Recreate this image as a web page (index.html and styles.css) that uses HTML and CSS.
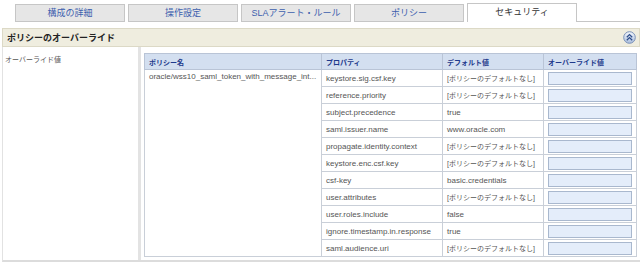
FILE: index.html
```html
<!DOCTYPE html>
<html lang="ja">
<head>
    <meta charset="UTF-8">
    <title>セキュリティ</title>
    <link rel="stylesheet" href="styles.css">
</head>
<body>
    <!-- Tabs -->
    <div class="tabs">
        <div class="tab">構成の詳細</div>
        <div class="tab">操作設定</div>
        <div class="tab">SLAアラート・ルール</div>
        <div class="tab">ポリシー</div>
        <div class="tab active">セキュリティ</div>
        <div class="tab-fill"></div>
    </div>

    <!-- Policy override section -->
    <div class="section">
        <div class="section-header">
            <span>ポリシーのオーバーライド</span>
            <svg class="collapse" width="13" height="13" viewBox="0 0 13 13">
                <defs>
                    <linearGradient id="g" x1="0" y1="0" x2="0" y2="1">
                        <stop offset="0" stop-color="#f4f7fc"/>
                        <stop offset="1" stop-color="#a9bddc"/>
                    </linearGradient>
                </defs>
                <circle cx="6.5" cy="6.5" r="5.8" fill="url(#g)" stroke="#7890b8" stroke-width="1"/>
                <path d="M3.8 6.2 L6.5 3.6 L9.2 6.2 M3.8 9.2 L6.5 6.6 L9.2 9.2" fill="none" stroke="#2f4f8c" stroke-width="1.3"/>
            </svg>
        </div>
        <div class="section-body">
            <div class="label-col">オーバーライド値</div>
            <div class="table-col">
                <table class="props">
                    <colgroup>
                        <col class="c-name">
                        <col class="c-prop">
                        <col class="c-def">
                        <col class="c-over">
                    </colgroup>
                    <thead>
                        <tr>
                            <th>ポリシー名</th>
                            <th>プロパティ</th>
                            <th>デフォルト値</th>
                            <th>オーバーライド値</th>
                        </tr>
                    </thead>
                    <tbody>
                        <tr>
                            <td class="policy" rowspan="11">oracle/wss10_saml_token_with_message_int...</td>
                            <td>keystore.sig.csf.key</td>
                            <td class="jp">[ポリシーのデフォルトなし]</td>
                            <td><input type="text"></td>
                        </tr>
                        <tr><td>reference.priority</td><td class="jp">[ポリシーのデフォルトなし]</td><td><input type="text"></td></tr>
                        <tr><td>subject.precedence</td><td>true</td><td><input type="text"></td></tr>
                        <tr><td>saml.issuer.name</td><td>www.oracle.com</td><td><input type="text"></td></tr>
                        <tr><td>propagate.identity.context</td><td class="jp">[ポリシーのデフォルトなし]</td><td><input type="text"></td></tr>
                        <tr><td>keystore.enc.csf.key</td><td class="jp">[ポリシーのデフォルトなし]</td><td><input type="text"></td></tr>
                        <tr><td>csf-key</td><td>basic.credentials</td><td><input type="text"></td></tr>
                        <tr><td>user.attributes</td><td class="jp">[ポリシーのデフォルトなし]</td><td><input type="text"></td></tr>
                        <tr><td>user.roles.include</td><td>false</td><td><input type="text"></td></tr>
                        <tr><td>ignore.timestamp.in.response</td><td>true</td><td><input type="text"></td></tr>
                        <tr><td>saml.audience.uri</td><td class="jp">[ポリシーのデフォルトなし]</td><td><input type="text"></td></tr>
                    </tbody>
                </table>
            </div>
        </div>
    </div>
</body>
</html>
```

FILE: styles.css
```css
/* Basic page styling */
body {
    margin: 0;
    font-family: "Liberation Sans", "Noto Sans CJK JP", sans-serif;
    font-size: 9px;
    color: #555555;
    background-color: #ffffff;
    overflow: hidden;
}

/* Tab strip */
.tabs {
    display: flex;
    align-items: flex-end;
    gap: 3px;
    padding: 3px 0 0 15px;
    height: 19px;
}

.tab {
    box-sizing: border-box;
    width: 110px;
    height: 18px;
    line-height: 16px;
    text-align: center;
    background-color: #e6e6e6;
    border: 1px solid #c6c6c6;
    color: #3d5fae;
}

.tab.active {
    height: 19px;
    background-color: #ffffff;
    border-bottom: none;
    color: #333333;
}

.tab-fill {
    flex: 1;
    margin-left: -3px;
    border-bottom: 1px solid #c6c6c6;
}

/* Section */
.section {
    margin: 6px 0 0 2px;
}

.section-header {
    display: flex;
    justify-content: space-between;
    align-items: center;
    height: 17px;
    padding: 0 3px 0 4px;
    background-color: #efeddf;
    border: 1px solid #dcd9c6;
    font-weight: bold;
    color: #222222;
}

.collapse {
    display: block;
}

.section-body {
    display: flex;
    height: 213px;
    border-left: 1px solid #e2e2e2;
    border-bottom: 2px solid #dcdcdc;
}

.label-col {
    flex-shrink: 0;
    width: 131px;
    padding: 7px 2px 0 2px;
    border-right: 3px solid #e3e3e3;
    font-size: 7px;
}

.table-col {
    padding: 6px 0 0 3px;
}

/* Properties table */
.props {
    table-layout: fixed;
    width: 492px;
    border-collapse: collapse;
    border: 1px solid #b9c4d6;
    font-size: 8px;
}

.c-name { width: 177px; }
.c-prop { width: 121px; }
.c-def { width: 101px; }
.c-over { width: 93px; }

.props th {
    height: 15px;
    padding: 0 4px;
    text-align: left;
    background-color: #d3dff0;
    border: 1px solid #b9c4d6;
    color: #1e3a8c;
    font-weight: bold;
    font-size: 7px;
}

.props td {
    height: 16px;
    padding: 0 4px;
    border: 1px solid #c9cfd8;
    white-space: nowrap;
    overflow: hidden;
}

.props td.jp {
    font-size: 7px;
}

.props td.policy {
    vertical-align: top;
    padding-top: 2px;
}

.props input {
    display: block;
    box-sizing: border-box;
    width: 84px;
    height: 13px;
    margin: 0;
    padding: 0;
    background-color: #e4edfa;
    border: 1px solid #a9b8ce;
}
```
